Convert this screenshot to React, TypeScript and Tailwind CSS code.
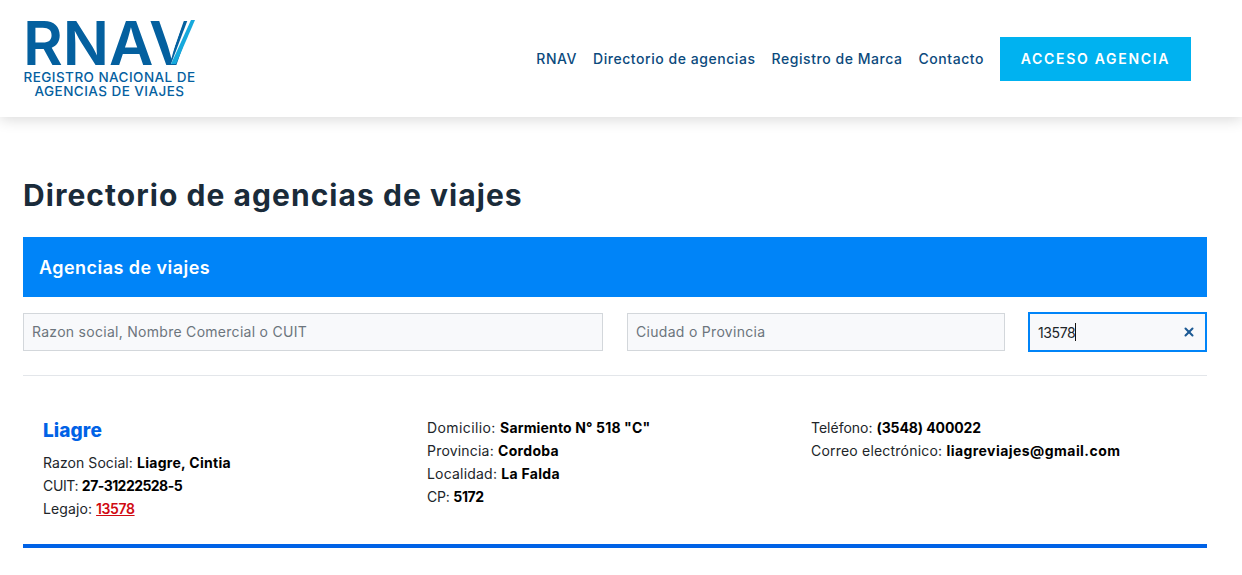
import { X } from 'lucide-react'

const font = { fontFamily: 'Inter, "Open Sans", sans-serif' }

function Logo() {
  return (
    <div className="relative w-[176px] h-[82px] text-[#04609f]">
      <div className="h-[52px] text-[61px] leading-[52px] font-semibold whitespace-nowrap font-['Inter',sans-serif]">
        RNAV
      </div>
      {/* the V's right arm is split into a thin dark stripe and a light one */}
      <svg className="absolute left-[140px] top-0" width="36" height="50" viewBox="0 0 36 50">
        <path d="M14 2H21.5L9 37z" fill="#fff" />
        <path d="M25 2h4L10 47H8z" fill="#fff" />
        <path d="M28 3h4L13 47H8z" fill="#16a9dc" />
      </svg>
      <div className="text-center text-[13.5px] leading-[14px] font-medium whitespace-nowrap font-['Inter',sans-serif] tracking-[0.45px] mt-[1px] ml-[-3px]">
        <div>REGISTRO NACIONAL DE</div>
        <div>AGENCIAS DE VIAJES</div>
      </div>
    </div>
  )
}

function Field({
  label,
  value,
  labelSpacing = 'tracking-[0.2px]',
  spacing = 'tracking-[0.3px]',
}: {
  label: string
  value: string
  labelSpacing?: string
  spacing?: string
}) {
  return (
    <div className={`h-[23px] leading-[23px] text-[14px] text-[#212529] whitespace-nowrap ${labelSpacing}`}>
      {label}: <strong className={`font-bold text-black ${spacing}`}>{value}</strong>
    </div>
  )
}

export default function App() {
  return (
    <div className="w-[1242px] h-[575px] overflow-hidden bg-white" style={font}>
      <header className="h-[117px] bg-white shadow-[0_2px_14px_rgba(0,0,0,0.16)] flex items-center justify-between pl-[23px] pr-[51px]">
        <div className="mt-[-1px]">
          <Logo />
        </div>
        <nav className="flex items-center gap-4 text-[14px] font-medium tracking-[0.55px] text-[#0b4a7d]">
          <a>RNAV</a>
          <a>Directorio de agencias</a>
          <a>Registro de Marca</a>
          <a>Contacto</a>
          <a className="w-[191px] h-[44px] flex items-center justify-center bg-[#00b2f0] text-white font-semibold tracking-[1.7px]">
            ACCESO AGENCIA
          </a>
        </nav>
      </header>

      <main className="px-[23px] w-[1230px]">
        <h1 className="mt-[59px] h-[38px] leading-[38px] text-[30px] font-bold tracking-[1.05px] text-[#1a2b3a]">
          Directorio de agencias de viajes
        </h1>
        <div className="mt-[23px] h-[60px] bg-[#0084f8] flex items-center pl-4 text-[18px] tracking-[0.45px] font-semibold text-white">
          Agencias de viajes
        </div>

        <div className="mt-4 flex items-center h-[38px]">
          <input
            readOnly
            placeholder="Razon social, Nombre Comercial o CUIT"
            className="w-[580px] h-[38px] px-2 pb-[2px] text-[14px] tracking-[0.28px] bg-[#f8f9fb] border border-[#d3d7db] outline-none placeholder:text-[#6c757d]"
          />
          <input
            readOnly
            placeholder="Ciudad o Provincia"
            className="ml-6 w-[378px] h-[38px] px-2 pb-[2px] text-[14px] tracking-[0.3px] bg-[#f8f9fb] border border-[#d3d7db] outline-none placeholder:text-[#6c757d]"
          />
          <div className="relative ml-[23px] w-[179px] h-[40px] flex items-center pl-2 bg-[#f8f9fb] border-2 border-[#0084f8] text-[14px] text-[#212529] tracking-[-0.4px]">
            13578
            <span className="w-px h-[18px] bg-[#111]" />
            <X className="absolute right-[9px] top-[11px] w-[14px] h-[14px] text-[#1d5a94]" strokeWidth={3.5} />
          </div>
        </div>

        <div className="mt-[24px] border-t border-[#e3e6ea]" />

        <div className="h-[172px] border-b-4 border-[#0062e6] pl-5 pt-[40px] grid grid-cols-[384px_384px_384px] content-start">
          <div>
            <a className="block h-[30px] text-[19px] font-extrabold tracking-[0.1px] leading-[30px] text-[#0062e6]">Liagre</a>
            <div className="mt-[5px]">
              <Field label="Razon Social" value="Liagre, Cintia" labelSpacing="tracking-[0.07px]" />
              <Field label="CUIT" value="27-31222528-5" labelSpacing="tracking-[-0.35px]" spacing="tracking-[-0.55px]" />
              <div className="h-[23px] leading-[23px] text-[14px] tracking-[0.1px] text-[#212529]">
                Legajo: <a className="font-semibold tracking-[-0.4px] text-[#d00a12] underline">13578</a>
              </div>
            </div>
          </div>
          <div>
            <Field label="Domicilio" value={'Sarmiento N° 518 "C"'} labelSpacing="tracking-[0.4px]" spacing="tracking-[0.15px]" />
            <Field label="Provincia" value="Cordoba" />
            <Field label="Localidad" value="La Falda" />
            <Field label="CP" value="5172" labelSpacing="tracking-[-0.2px]" spacing="tracking-[-0.4px]" />
          </div>
          <div>
            <Field label="Teléfono" value="(3548) 400022" labelSpacing="tracking-[0px]" spacing="tracking-[-0.1px]" />
            <Field label="Correo electrónico" value="liagreviajes@gmail.com" spacing="tracking-[0.45px]" />
          </div>
        </div>
      </main>
    </div>
  )
}
